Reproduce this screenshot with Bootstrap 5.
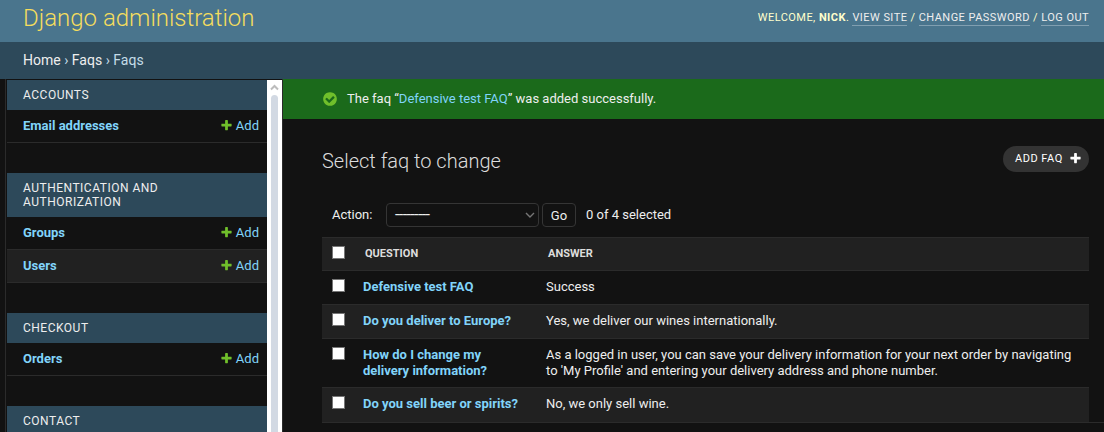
<!DOCTYPE html>
<html lang="en">
<head>
<meta charset="utf-8">
<title>Select faq to change | Django administration</title>
<link href="https://cdn.jsdelivr.net/npm/bootstrap@5.3.0/dist/css/bootstrap.min.css" rel="stylesheet">
<style>
body{background:#121212;color:#eee;font:13px/16px Roboto,"Liberation Sans",sans-serif;height:432px}
a{color:#81d4fa;text-decoration:none}
.site-header{height:42px;background:#4a758d;padding:0 15px 6px 23px}
.site-header h1{font-size:24px;line-height:28px;font-weight:300;color:#f5dd5d}
.user-tools{font-size:11px;line-height:14px;letter-spacing:.45px;color:#ffc;font-weight:400}
.user-tools a{color:#eee;border-bottom:1px solid #819fb1;display:inline-block}
.crumbs{height:37px;background:#2d495a;padding:0 0 2px 23px;font-size:14px;color:#c4dce8}
.crumbs a{color:#eee}
.side-nav{width:283px;flex:none;padding-left:5px}
.side-frame{border-left:1px solid #2b2b2b;border-right:1px solid #2b2b2b;padding:1px 0 0 1px;height:353px}
.app-group{margin-bottom:30px}
.app-group h2{background:#2d495a;font-size:12px;line-height:14px;letter-spacing:.5px;font-weight:400;padding:8px 60px 8px 16px;margin:0;color:#eee}
.model-row{height:33px;padding:0 8px 1px 16px;border-bottom:1px solid #2b2b2b}
.model-row.alt{background:#212121}
.plus{width:13px;height:13px;fill:#70bf2b;margin-right:3px}
.track{width:15px;flex:none;background:#fff}
.thumb{width:7px;background:#d2d9e3;border-radius:4px 4px 0 0;margin-left:4px}
.message{height:40px;background:#1b6a1b;padding-left:39px}
.message svg{margin-right:9px}
.content-area{padding:0 15px 0 39px}
.content-area h1{font-size:20px;line-height:24px;font-weight:300;color:#ddd;padding-top:3px}
.title-line{padding-top:27px;height:84px}
.actions-bar{height:34px;padding:0 0 10px 10px}
.act-label{width:54px}
.add-pill{background:#333;color:#fff;border-radius:15px;width:86px;height:26px;font-size:11px;letter-spacing:.5px;padding:0 7px 1px 12px}
.act-select,.go-btn{height:24px;border:1px solid #353535;border-radius:4px;background:#121212;color:#eee}
.act-select{width:153px;padding:0 3px 0 8px}
.act-select span{font-size:16px;letter-spacing:-.6px}
.go-btn{width:34px;padding:1px 0 0;margin:0 10px 0 3px}
.faq-line{display:grid;grid-template-columns:41px 183px 1fr;border-bottom:1px solid #2b2b2b;padding-top:8px}
.faq-line.alt{background:#212121}
.faq-line input{appearance:none;width:13px;height:13px;background:#fff;border:1px solid #767676;margin:0 0 0 10px;display:block}
.faq-head{font-size:11px;font-weight:700;color:#ddd;height:34px;border-top:1px solid #2b2b2b}
.faq-head span{padding-left:2px}
.h34{height:34px}.h49{height:49px}.h35{height:35px}
.page-rule{height:1px;background:#2b2b2b;margin:-1px -15px 0 0}
</style>
<script src="https://cdn.jsdelivr.net/npm/bootstrap@5.3.0/dist/js/bootstrap.bundle.min.js"></script>
</head>
<body class="overflow-hidden">
<svg class="d-none"><symbol id="plus" viewBox="0 0 1792 1792"><path d="M1600 736v192q0 40-28 68t-68 28h-416v416q0 40-28 68t-68 28h-192q-40 0-68-28t-28-68v-416h-416q-40 0-68-28t-28-68v-192q0-40 28-68t68-28h416v-416q0-40 28-68t68-28h192q40 0 68 28t28 68v416h416q40 0 68 28t28 68z"/></symbol></svg>
<header class="site-header d-flex justify-content-between align-items-center">
  <h1 class="m-0">Django administration</h1>
  <div class="user-tools text-nowrap">WELCOME, <b>NICK</b>. <a href="#">VIEW SITE</a> / <a href="#">CHANGE PASSWORD</a> / <a href="#">LOG OUT</a></div>
</header>
<nav class="crumbs d-flex align-items-center"><div><a href="#">Home</a> › <a href="#">Faqs</a> › Faqs</div></nav>
<div class="d-flex">
  <aside class="side-nav">
    <div class="side-frame d-flex overflow-hidden">
      <div class="flex-grow-1">
        <section class="app-group"><h2>ACCOUNTS</h2>
          <div class="model-row d-flex align-items-center justify-content-between"><a href="#" class="fw-bold">Email addresses</a><a href="#" class="d-flex align-items-center"><svg class="plus"><use href="#plus"/></svg>Add</a></div>
        </section>
        <section class="app-group"><h2>AUTHENTICATION AND AUTHORIZATION</h2>
          <div class="model-row d-flex align-items-center justify-content-between"><a href="#" class="fw-bold">Groups</a><a href="#" class="d-flex align-items-center"><svg class="plus"><use href="#plus"/></svg>Add</a></div>
          <div class="model-row alt d-flex align-items-center justify-content-between"><a href="#" class="fw-bold">Users</a><a href="#" class="d-flex align-items-center"><svg class="plus"><use href="#plus"/></svg>Add</a></div>
        </section>
        <section class="app-group"><h2>CHECKOUT</h2>
          <div class="model-row d-flex align-items-center justify-content-between"><a href="#" class="fw-bold">Orders</a><a href="#" class="d-flex align-items-center"><svg class="plus"><use href="#plus"/></svg>Add</a></div>
        </section>
        <section class="app-group"><h2>CONTACT</h2></section>
      </div>
      <div class="track d-flex flex-column">
        <svg width="15" height="15" fill="none" stroke="#bcbcbc" stroke-width="2"><path d="M4 9.5 7.5 6 11 9.5"/></svg>
        <div class="thumb flex-grow-1"></div>
      </div>
    </div>
  </aside>
  <main class="flex-grow-1">
    <div class="message d-flex align-items-center"><svg width="16" height="16" viewBox="0 0 1792 1792" fill="#70bf2b"><path d="M1412 734q0-28-18-46l-91-90q-19-19-45-19t-45 19l-408 407-226-226q-19-19-45-19t-45 19l-91 90q-18 18-18 46 0 27 18 45l362 362q19 19 45 19 27 0 46-19l543-543q18-18 18-45zm252 162q0 209-103 385.5t-279.5 279.5-385.5 103-385.5-103-279.5-279.5-103-385.5 103-385.5 279.5-279.5 385.5-103 385.5 103 279.5 279.5 103 385.5z"/></svg><span>The faq “<a href="#">Defensive test FAQ</a>” was added successfully.</span></div>
    <div class="content-area">
      <div class="title-line d-flex justify-content-between align-items-start">
        <h1 class="m-0">Select faq to change</h1>
        <a href="#" class="add-pill d-flex align-items-center justify-content-between">ADD FAQ <svg width="13" height="13" fill="#fff"><use href="#plus"/></svg></a>
      </div>
      <div class="actions-bar d-flex align-items-center">
        <span class="act-label">Action:</span>
        <div class="act-select d-flex align-items-center justify-content-between"><span>---------</span><svg width="10" height="6" fill="none" stroke="#767676" stroke-width="1.4"><path d="M1 1l4 4 4-4"/></svg></div>
        <button class="go-btn" type="button">Go</button>
        <span>0 of 4 selected</span>
      </div>
      <div class="faq-line alt faq-head"><input type="checkbox" aria-label="Select all"><span>QUESTION</span><span>ANSWER</span></div>
      <div class="faq-line h34"><input type="checkbox" aria-label="Select"><a href="#" class="fw-bold">Defensive test FAQ</a><span>Success</span></div>
      <div class="faq-line alt h34"><input type="checkbox" aria-label="Select"><a href="#" class="fw-bold">Do you deliver to Europe?</a><span>Yes, we deliver our wines internationally.</span></div>
      <div class="faq-line h49"><input type="checkbox" aria-label="Select"><a href="#" class="fw-bold">How do I change my<br>delivery information?</a><span>As a logged in user, you can save your delivery information for your next order by navigating<br>to 'My Profile' and entering your delivery address and phone number.</span></div>
      <div class="faq-line alt h35"><input type="checkbox" aria-label="Select"><a href="#" class="fw-bold">Do you sell beer or spirits?</a><span>No, we only sell wine.</span></div>
      <div class="page-rule"></div>
    </div>
  </main>
</div>
</body>
</html>
